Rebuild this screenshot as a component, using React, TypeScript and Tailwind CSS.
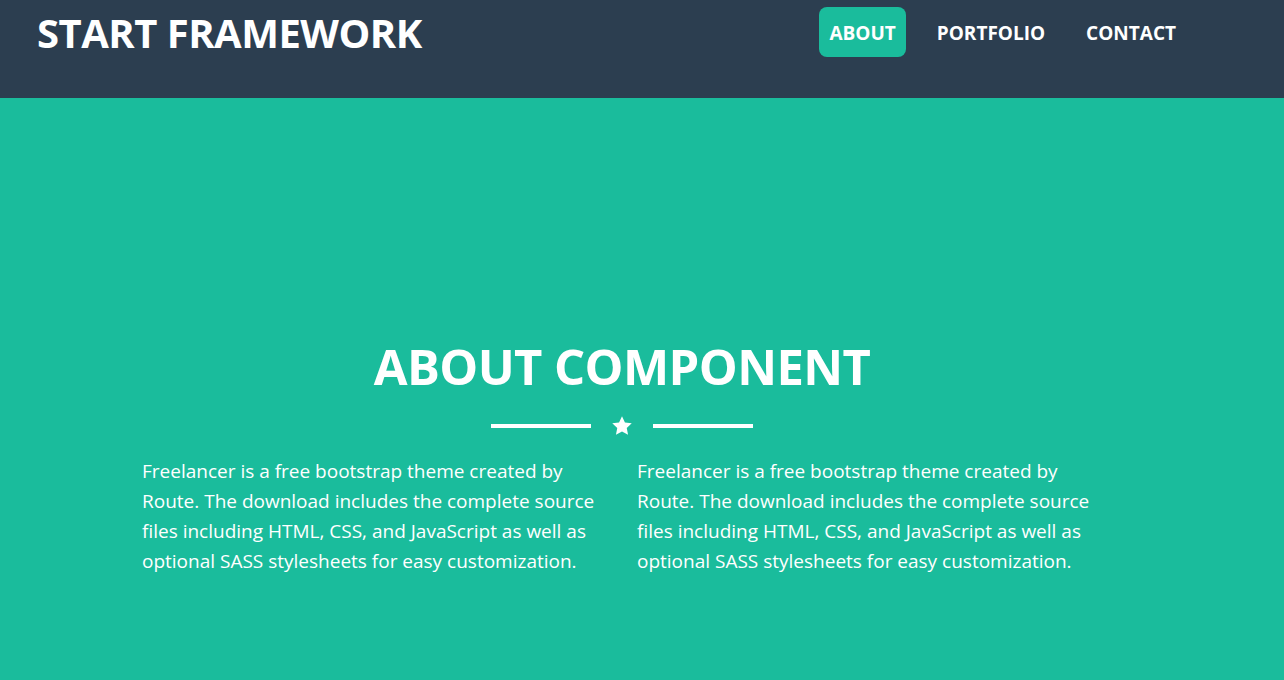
const body =
  "Freelancer is a free bootstrap theme created by Route. The download includes the complete source files including HTML, CSS, and JavaScript as well as optional SASS stylesheets for easy customization.";

function Star() {
  return (
    <svg viewBox="0 0 24 24" className="w-[24px] h-[24px]" fill="white">
      <path d="M12 2.2l2.95 6.2 6.8.85-5 4.7 1.3 6.75L12 17.4l-6.05 3.3 1.3-6.75-5-4.7 6.8-.85z" />
    </svg>
  );
}

export default function App() {
  return (
    <div className="min-h-screen bg-[#1abc9c] font-['Open_Sans',sans-serif] text-white">
      {/* Navbar */}
      <header className="h-[98px] bg-[#2c3e50] flex items-start justify-between pl-[37px] pr-[98px]">
        <h1 className="text-[40px] font-bold leading-none mt-[13px] tracking-[-0.5px]">
          START FRAMEWORK
        </h1>
        <nav className="flex items-center gap-[11px] mt-[7px]">
          <a className="h-[50px] px-[10px] pt-[2px] flex items-center rounded-lg bg-[#1abc9c] text-[19px] font-bold">
            ABOUT
          </a>
          <a className="h-[50px] px-[20px] pt-[2px] flex items-center text-[19px] font-bold">
            PORTFOLIO
          </a>
          <a className="h-[50px] px-[10px] pt-[2px] flex items-center text-[19px] font-bold">
            CONTACT
          </a>
        </nav>
      </header>

      {/* About */}
      <section className="pt-[244px] pb-[100px]">
        <div className="ml-[142px] w-[960px]">
          <h2 className="text-center text-[49px] font-bold leading-none tracking-[-0.6px]">
            ABOUT COMPONENT
          </h2>
          <div className="flex items-center justify-center gap-[19px] mt-[23px]">
            <div className="w-[100px] h-[4px] bg-white" />
            <Star />
            <div className="w-[100px] h-[4px] bg-white" />
          </div>
          <div className="grid grid-cols-2 gap-[30px] mt-[18px]">
            <p className="text-[19px] leading-[30px]">{body}</p>
            <p className="text-[19px] leading-[30px]">{body}</p>
          </div>
        </div>
      </section>
    </div>
  );
}
